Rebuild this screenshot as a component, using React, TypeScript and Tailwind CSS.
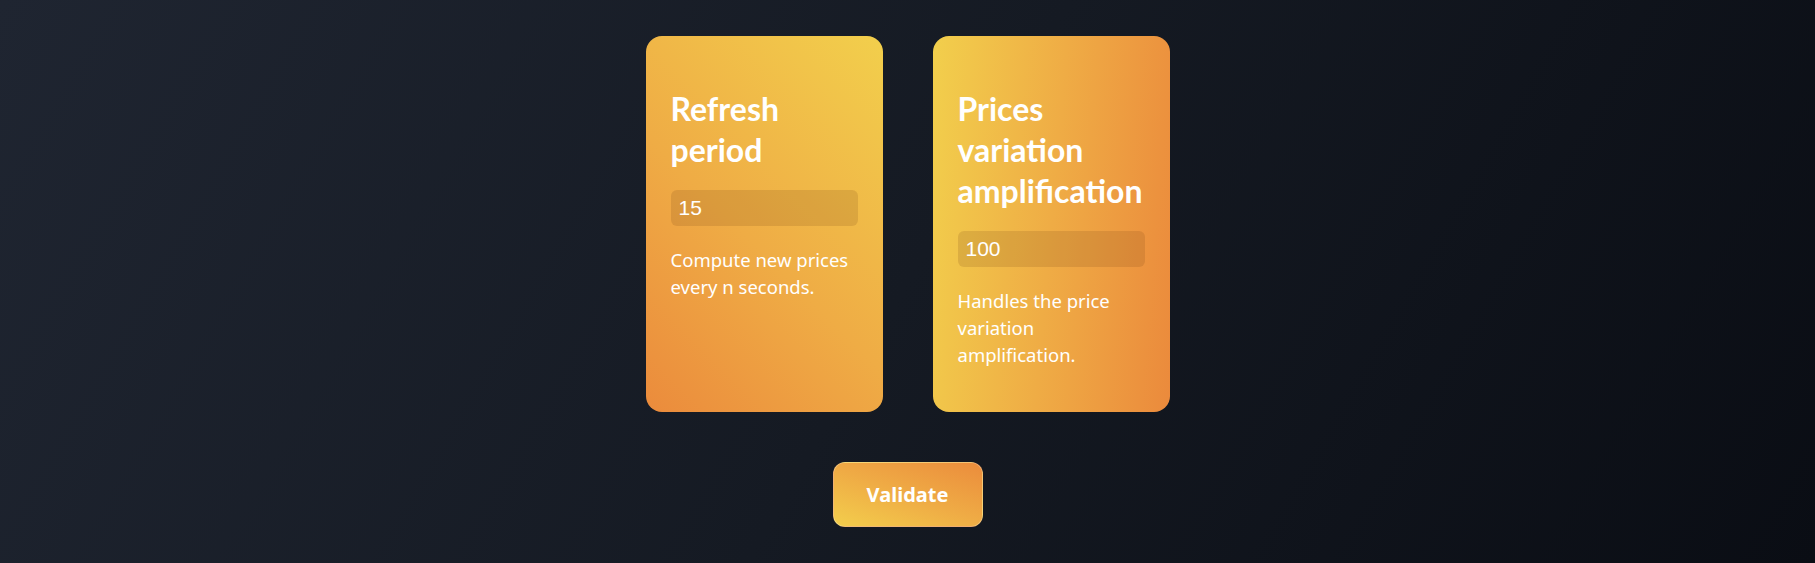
import React from "react";

function Card({
  title,
  value,
  desc,
  gradient,
}: {
  title: string;
  value: string;
  desc: string;
  gradient: string;
}) {
  return (
    <div className={`w-[237px] rounded-2xl px-[25px] pt-[52px] pb-[44px] flex flex-col ${gradient}`}>
      <h2 className="m-0 font-['Lato','Noto_Sans',sans-serif] text-[32px] leading-[41px] font-bold text-white">
        {title}
      </h2>
      <input
        defaultValue={value}
        className="mt-[20px] h-[36px] w-full rounded-md border-0 bg-[rgba(110,60,20,0.16)] px-2 font-['Liberation_Sans',Arial,sans-serif] text-[21px] text-white outline-none"
      />
      <p className="mt-[20px] text-[18.5px] leading-[27px] text-white">{desc}</p>
    </div>
  );
}

export default function App() {
  return (
    <div className="flex h-[563px] w-full flex-col items-center justify-center bg-[linear-gradient(120deg,#1f2531_0%,#151a23_50%,#0a0d14_100%)] font-['Segoe_UI','Noto_Sans','Open_Sans',sans-serif]">
      <div className="flex items-stretch gap-[50px]">
        <Card
          title="Refresh period"
          value="15"
          desc="Compute new prices every n seconds."
          gradient="bg-[linear-gradient(45deg,#eb8b3c_0%,#efac45_45%,#f2cf4c_100%)]"
        />
        <Card
          title="Prices variation amplification"
          value="100"
          desc="Handles the price variation amplification."
          gradient="bg-[linear-gradient(95deg,#f2cf4c_0%,#efac45_50%,#eb8a3c_100%)]"
        />
      </div>
      <button className="mt-[50px] h-[65px] w-[150px] rounded-xl border border-[rgba(255,255,255,0.25)] bg-[linear-gradient(200deg,#eb8c3c_0%,#efab45_50%,#f3ce4c_100%)] font-['Noto_Sans',sans-serif] text-[20px] font-bold text-white">
        Validate
      </button>
    </div>
  );
}
